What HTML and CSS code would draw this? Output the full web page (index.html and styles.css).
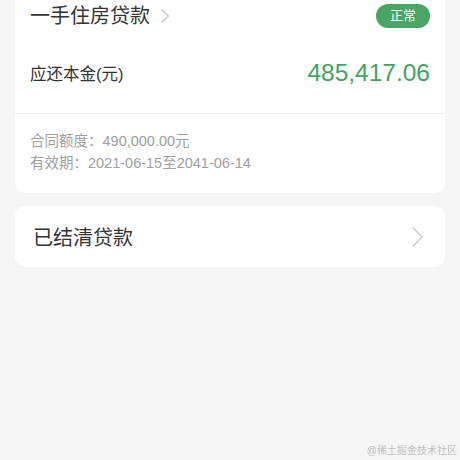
FILE: index.html
```html
<!DOCTYPE html>
<html lang="zh-CN">
<head>
<meta charset="utf-8">
<link rel="stylesheet" href="styles.css">
</head>
<body>
<div class="page">
  <section class="card loan">
    <div class="head">
      <div class="title">一手住房贷款
        <svg class="chev-sm" width="10" height="16" viewBox="0 0 10 16"><path d="M1.5 1.5 L8.5 8 L1.5 14.5" fill="none" stroke="#c4c4c4" stroke-width="1.2"/></svg>
      </div>
      <span class="badge">正常</span>
    </div>
    <div class="amount-row">
      <span class="label">应还本金(元)</span>
      <span class="amount">485,417.06</span>
    </div>
    <div class="details">
      <div class="line">合同额度：490,000.00元</div>
      <div class="line">有效期：2021-06-15至2041-06-14</div>
    </div>
  </section>
  <section class="card settled">
    <span class="settled-text">已结清贷款</span>
    <svg class="chev" width="13" height="22" viewBox="0 0 13 22"><path d="M1.5 1.5 L11 11 L1.5 20.5" fill="none" stroke="#c8c8c8" stroke-width="1.4"/></svg>
  </section>
</div>
<div class="watermark">@稀土掘金技术社区</div>
</body>
</html>
```
FILE: styles.css
```css
html, body {
  margin: 0;
  padding: 0;
  background: #f5f5f5;
  font-family: "Liberation Sans", "Noto Sans CJK SC", sans-serif;
  height: 100%;
  overflow: hidden;
}
.page {
  padding: 0 15px;
}
.card {
  background: #fff;
  border-radius: 10px;
}
.loan {
  margin-top: -12px;
  padding-top: 12px;
}
.head {
  height: 32px;
  display: flex;
  align-items: center;
  justify-content: space-between;
  padding: 0 15px;
}
.title {
  font-size: 20px;
  color: #333;
  display: flex;
  align-items: center;
  gap: 10px;
  line-height: 32px;
}
.badge {
  width: 54px;
  height: 24px;
  line-height: 24px;
  border-radius: 12px;
  background: #48a563;
  color: #fff;
  font-size: 13px;
  text-align: center;
  margin-top: -1px;
}
.amount-row {
  height: 81px;
  display: flex;
  align-items: center;
  justify-content: space-between;
  padding: 0 15px;
}
.label {
  font-size: 16.5px;
  color: #333;
}
.amount {
  font-size: 24.5px;
  color: #3fa45f;
}
.details {
  border-top: 1px solid #eeeeee;
  padding: 16px 15px 19px;
}
.line {
  font-size: 14.5px;
  line-height: 22px;
  color: #a0a0a0;
}
.settled {
  margin-top: 13px;
  height: 61px;
  display: flex;
  align-items: center;
  justify-content: space-between;
  padding: 0 21px 0 18px;
}
.settled-text {
  font-size: 20px;
  color: #333;
}
.watermark {
  position: fixed;
  right: 3px;
  bottom: 3px;
  font-size: 10px;
  color: #bdbdbd;
}
```
